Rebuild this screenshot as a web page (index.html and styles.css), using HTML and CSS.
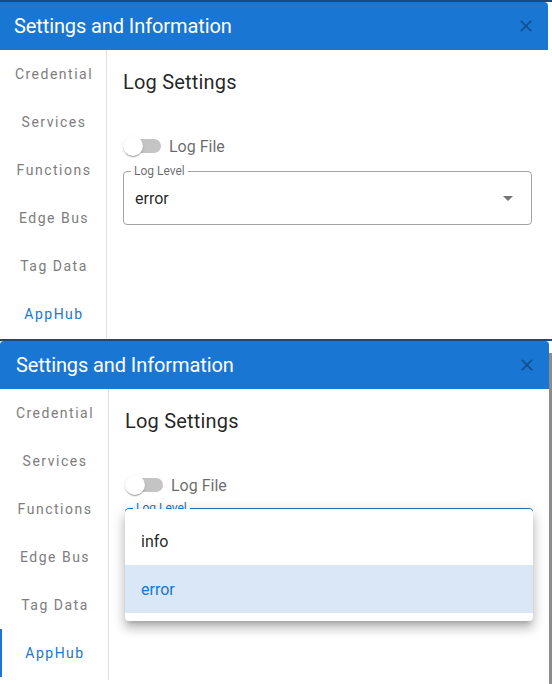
FILE: index.html
```html
<!DOCTYPE html>
<html>
<head>
<meta charset="utf-8">
<link rel="stylesheet" href="styles.css">
</head>
<body>
<div class="shot shot-a">
  <div class="frame frame-a">
    <header class="dlg-head">
      <h1 class="dlg-title">Settings and Information</h1>
      <span class="close"><svg viewBox="0 0 24 24" width="20" height="20"><path d="M19 6.41 17.59 5 12 10.59 6.41 5 5 6.41 10.59 12 5 17.59 6.41 19 12 13.41 17.59 19 19 17.59 13.41 12z"/></svg></span>
    </header>
    <div class="dlg-body">
      <nav class="side">
        <div class="tab">Credential</div>
        <div class="tab">Services</div>
        <div class="tab">Functions</div>
        <div class="tab">Edge Bus</div>
        <div class="tab">Tag Data</div>
        <div class="tab tab-active">AppHub</div>
      </nav>
      <main class="content">
        <h2 class="heading">Log Settings</h2>
        <div class="switch-row">
          <span class="switch"><span class="track"></span><span class="thumb"></span></span>
          <span class="switch-label">Log File</span>
        </div>
        <div class="select">
          <span class="sel-label">Log Level</span>
          <span class="sel-value">error</span>
          <svg class="arrow" viewBox="0 0 24 24" width="24" height="24"><path d="M7 10l5 5 5-5z"/></svg>
        </div>
      </main>
    </div>
  </div>
</div>
<div class="shot shot-b">
  <div class="frame frame-b">
    <header class="dlg-head">
      <h1 class="dlg-title">Settings and Information</h1>
      <span class="close"><svg viewBox="0 0 24 24" width="20" height="20"><path d="M19 6.41 17.59 5 12 10.59 6.41 5 5 6.41 10.59 12 5 17.59 6.41 19 12 13.41 17.59 19 19 17.59 13.41 12z"/></svg></span>
    </header>
    <div class="dlg-body">
      <nav class="side">
        <div class="tab">Credential</div>
        <div class="tab">Services</div>
        <div class="tab">Functions</div>
        <div class="tab">Edge Bus</div>
        <div class="tab">Tag Data</div>
        <div class="tab tab-active tab-marked">AppHub</div>
      </nav>
      <main class="content">
        <h2 class="heading">Log Settings</h2>
        <div class="switch-row">
          <span class="switch"><span class="track"></span><span class="thumb"></span></span>
          <span class="switch-label">Log File</span>
        </div>
        <div class="select select-focused">
          <span class="sel-label">Log Level</span>
          <span class="sel-value">error</span>
          <svg class="arrow" viewBox="0 0 24 24" width="24" height="24"><path d="M7 10l5 5 5-5z"/></svg>
          <ul class="menu">
            <li class="menu-item">info</li>
            <li class="menu-item menu-item-selected">error</li>
          </ul>
        </div>
      </main>
    </div>
  </div>
  <div class="edge"></div>
</div>
</body>
</html>
```
FILE: styles.css
```css
* { box-sizing: border-box; }
html, body { margin: 0; padding: 0; }
body {
  width: 552px;
  height: 684px;
  overflow: hidden;
  background: #ffffff;
  font-family: Roboto, "Liberation Sans", Arial, sans-serif;
  color: rgba(0,0,0,0.87);
}
.shot {
  border-top: 2px solid #1a4a7d;
  display: flex;
  align-items: flex-start;
}
.shot-a { height: 339px; }
.shot-b { height: 345px; }

.frame { background: #fff; display: flex; flex-direction: column; }
.frame-a { width: 548px; height: 337px; }
.frame-b { width: 549px; height: 343px; }

.dlg-head {
  height: 48px;
  background: #1976d2;
  display: flex;
  align-items: center;
  justify-content: space-between;
  padding: 0 12px 0 14px;
  border-radius: 0 4px 0 0;
}
.frame-b .dlg-head { padding-left: 16px; border-radius: 4px 4px 0 0; }
.dlg-title {
  margin: 0;
  font-size: 20px;
  font-weight: 400;
  color: #fff;
  letter-spacing: -0.1px;
}
.close { display: flex; }
.close svg { fill: rgba(0,0,0,0.33); }

.dlg-body { display: flex; flex: 1; }
.side {
  width: 107px;
  height: 288px;
  border-right: 1px solid #e0e0e0;
  display: flex;
  flex-direction: column;
}
.frame-b .side { width: 109px; height: 291px; }
.tab {
  height: 48px;
  display: flex;
  align-items: center;
  justify-content: center;
  padding-left: 2px;
  font-size: 14px;
  letter-spacing: 1.5px;
  color: #7d7d7d;
}
.tab-active { color: #1976d2; }
.tab-marked { box-shadow: inset 2px 0 0 #1976d2; }

.content { flex: 1; padding: 16px 16px 0 16px; }
.heading {
  margin: 0;
  font-size: 20px;
  font-weight: 400;
  line-height: 32px;
  letter-spacing: 0.2px;
  color: rgba(0,0,0,0.87);
}
.switch-row {
  margin-top: 29px;
  height: 38px;
  display: flex;
  align-items: center;
  gap: 8px;
}
.switch { position: relative; width: 38px; height: 20px; }
.track {
  position: absolute;
  left: 4px; top: 3px;
  width: 34px; height: 14px;
  border-radius: 7px;
  background: #c4c4c4;
}
.thumb {
  position: absolute;
  left: 0; top: 0;
  width: 20px; height: 20px;
  border-radius: 50%;
  background: #fff;
  box-shadow: 0 2px 1px -1px rgba(0,0,0,0.2), 0 1px 1px 0 rgba(0,0,0,0.14), 0 1px 3px 0 rgba(0,0,0,0.12);
}
.switch-label { font-size: 16px; color: rgba(0,0,0,0.6); }

.select {
  position: relative;
  margin-top: 6px;
  height: 54px;
  border: 1px solid #a3a3a3;
  border-radius: 4px;
  display: flex;
  align-items: center;
  padding: 0 11px 0 11px;
}
.sel-label {
  position: absolute;
  left: 7px; top: -9px;
  padding: 0 3px;
  background: #fff;
  font-size: 12px;
  line-height: 16px;
  color: rgba(0,0,0,0.6);
}
.sel-value { flex: 1; font-size: 16px; }
.arrow { fill: rgba(0,0,0,0.54); }

.select-focused {
  margin-top: 4px;
  border: 2px solid #1976d2;
  padding: 0 10px;
}
.select-focused .sel-label { color: #1976d2; left: 6px; top: -10px; }

.menu {
  position: absolute;
  left: -2px; right: -2px; top: -1px;
  margin: 0;
  padding: 8px 0;
  list-style: none;
  background: #fff;
  border-radius: 4px;
  box-shadow: 0 5px 5px -3px rgba(0,0,0,0.2), 0 8px 10px 1px rgba(0,0,0,0.14), 0 3px 14px 2px rgba(0,0,0,0.12);
}
.menu-item {
  height: 48px;
  display: flex;
  align-items: center;
  padding: 0 16px;
  font-size: 16px;
  color: rgba(0,0,0,0.87);
}
.menu-item-selected { background: #dae7f6; color: #1976d2; }

.edge {
  width: 3px;
  height: 331px;
  margin-top: 12px;
  background: #8c8c8c;
}
```
